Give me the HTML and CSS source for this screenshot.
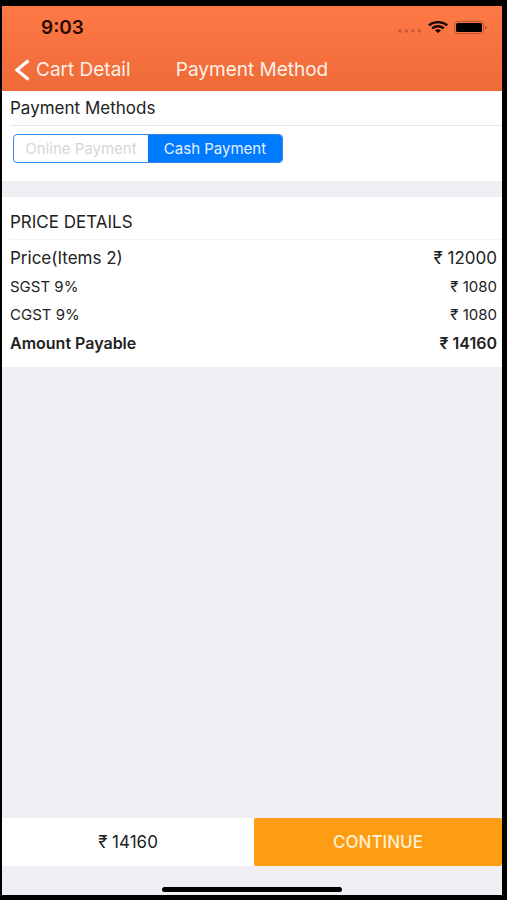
FILE: index.html
```html
<!DOCTYPE html>
<html lang="en">
<head>
<meta charset="utf-8">
<meta name="viewport" content="width=device-width, initial-scale=1">
<title>Payment Method</title>
<link rel="stylesheet" href="styles.css">
</head>
<body>
<div class="screen">
  <header class="header">
    <div class="status">
      <time class="clock">9:03</time>
      <div class="indicators">
        <svg class="signal" width="24" height="4" viewBox="0 0 24 4" aria-hidden="true">
          <circle cx="2" cy="2" r="1.7"/><circle cx="8.5" cy="2" r="1.7"/><circle cx="15" cy="2" r="1.7"/><circle cx="21.5" cy="2" r="1.7"/>
        </svg>
        <svg width="20" height="12" viewBox="0 0 20 12" aria-hidden="true">
          <g fill="none" stroke="#160500" stroke-width="2.4">
            <path d="M.8 4.300C6 .1 14 .1 19.200 4.300"/>
            <path d="M4.200 7.400C7.500 4.600 12.500 4.600 15.800 7.400"/>
          </g>
          <path fill="#160500" d="M6.900 9.300C8.700 7.900 11.300 7.900 13.100 9.300L10 12Z"/>
        </svg>
        <svg width="33" height="13" viewBox="0 0 33 13" aria-hidden="true">
          <rect x=".5" y=".5" width="29" height="12" rx="3" fill="none" stroke="#b9532f"/>
          <rect x="2" y="2" width="26" height="9" rx="1.500" fill="#000"/>
          <path d="M31 4.500C33 5 33 8 31 8.500Z" fill="#a74b2d"/>
        </svg>
      </div>
    </div>
    <nav class="nav">
      <a class="back" href="#cart">
        <svg width="16" height="22" viewBox="0 0 16 22" aria-hidden="true"><path d="M14.500 1.500L3 11L14.500 20.500" fill="none" stroke="#fff" stroke-width="3.200"/></svg>
        <span>Cart Detail</span>
      </a>
      <h1 class="title">Payment Method</h1>
    </nav>
  </header>

  <main class="content">
    <section class="card">
      <h2 class="heading" id="methods">Payment Methods</h2>
      <div class="segments" role="radiogroup" aria-labelledby="methods">
        <label class="segment"><input type="radio" name="method" value="online"><span>Online Payment</span></label>
        <label class="segment"><input type="radio" name="method" value="cash" checked><span>Cash Payment</span></label>
      </div>
    </section>

    <section class="card prices">
      <h2 class="heading price-heading">PRICE DETAILS</h2>
      <dl class="rows">
        <div class="row item"><dt>Price(Items 2)</dt><dd>₹ 12000</dd></div>
        <div class="row"><dt>SGST 9%</dt><dd>₹ 1080</dd></div>
        <div class="row"><dt>CGST 9%</dt><dd>₹ 1080</dd></div>
        <div class="row total"><dt>Amount Payable</dt><dd>₹ 14160</dd></div>
      </dl>
    </section>
  </main>

  <footer class="footer">
    <div class="checkout">
      <div class="amount">₹ 14160</div>
      <button class="continue" type="button">CONTINUE</button>
    </div>
    <div class="home"></div>
  </footer>
</div>
</body>
</html>
```
FILE: styles.css
```css
* { box-sizing: border-box; }

body {
  margin: 0;
  min-height: 100vh;
  display: flex;
  padding: 6px 5px 5px 2px;
  background: #000;
  color: #222;
  font-family: Inter, "Liberation Sans", sans-serif;
  font-size: 17px;
}

h1, h2, dl, dd { margin: 0; }

.screen {
  flex: 1;
  display: flex;
  flex-direction: column;
  background: #efeef3;
}

.header {
  background: linear-gradient(#ff7947, #ee6a37);
}

.status {
  display: flex;
  justify-content: space-between;
  align-items: center;
  height: 42px;
  padding: 0 15px 0 39px;
}

.clock { color: #260b02; font-size: 19px; font-weight: 600; }

.indicators { display: flex; align-items: center; gap: 6px; }

.signal { fill: #c45a36; margin-top: 8px; }

.nav {
  display: grid;
  grid-template-columns: 1fr auto 1fr;
  align-items: center;
  height: 43px;
  padding: 0 12px;
  color: #fff0e8;
  font-size: 19px;
}

.back {
  display: flex;
  align-items: center;
  gap: 6px;
  color: inherit;
  text-decoration: none;
  white-space: nowrap;
}

.title { font-size: 19px; font-weight: 400; }

.content { flex: 1; }

.card { background: #fff; }

.heading {
  height: 35px;
  margin-left: 8px;
  border-bottom: 1px solid #e5e5ec;
  font-size: 17px;
  font-weight: 400;
  line-height: 34px;
}

.segments {
  display: grid;
  grid-template-columns: 1fr 1fr;
  width: 54%;
  height: 29px;
  margin: 8px 0 0 11px;
  border: 1px solid #3388e5;
  border-radius: 4px;
  overflow: hidden;
  font-size: 15px;
}

.card:first-child { padding-bottom: 18px; }

.segment { position: relative; display: grid; }

.segment input {
  position: absolute;
  inset: 0;
  margin: 0;
  opacity: 0;
}

.segment span {
  display: grid;
  place-items: center;
  color: #d5d5d8;
  white-space: nowrap;
}

.segment input:checked + span { background: #007aff; color: #e5f1ff; }

.prices { margin-top: 16px; padding: 8px 0 10px; }

.price-heading { border-color: #f2f2f4; }

.rows { padding: 3px 5px 0 8px; }

.row {
  display: flex;
  justify-content: space-between;
  font-size: 15px;
  line-height: 28px;
}

.item { font-size: 17px; line-height: 30px; }

.total { font-size: 16px; font-weight: 600; }

.checkout {
  display: grid;
  grid-template-columns: 252fr 248fr;
  height: 48px;
}

.amount {
  display: grid;
  place-items: center;
  background: #fff;
}

.continue {
  border: 0;
  border-radius: 2px;
  background: #fd9d14;
  color: #fff0d0;
  font: 500 17px Inter, "Liberation Sans", sans-serif;
}

.home {
  width: 36%;
  height: 5px;
  margin: 21px auto 3px;
  border-radius: 3px;
  background: #000;
}
```
